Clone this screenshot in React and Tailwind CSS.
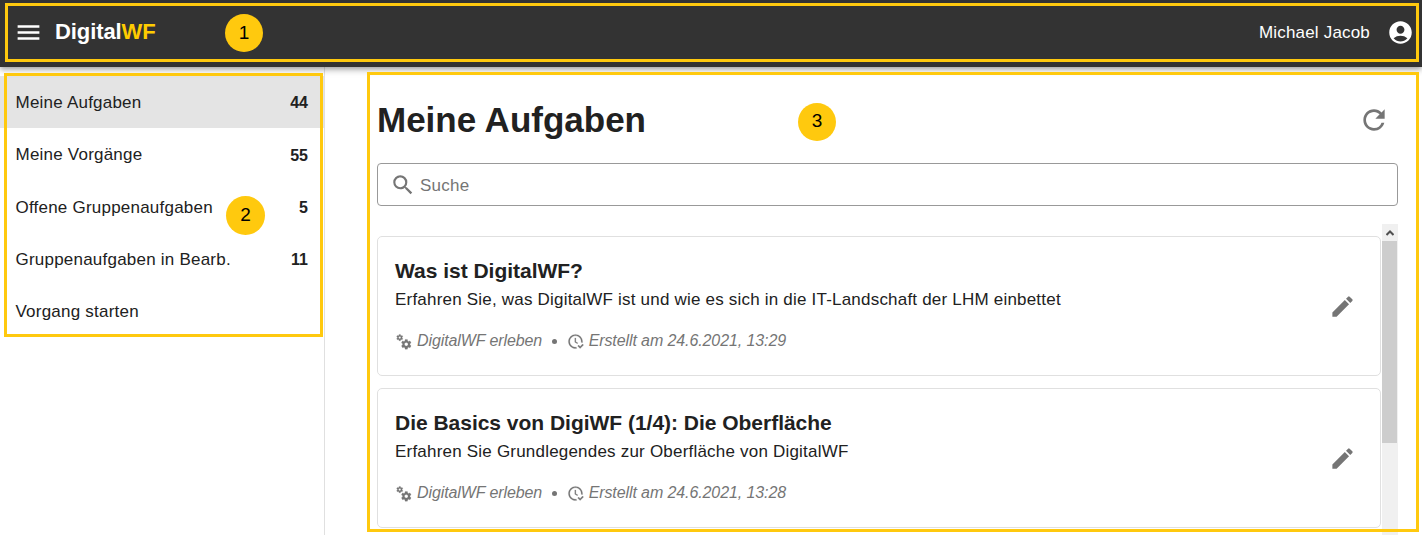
import React from "react";
import { MdMenu, MdAccountCircle, MdRefresh, MdSearch, MdEdit } from "react-icons/md";

const COGS =
  "M15.9,18.45C17.25,18.45 18.35,17.35 18.35,16C18.35,14.65 17.25,13.55 15.9,13.55C14.54,13.55 13.45,14.65 13.45,16C13.45,17.35 14.54,18.45 15.9,18.45M21.1,16.68L22.58,17.84C22.71,17.95 22.75,18.13 22.66,18.29L21.26,20.71C21.17,20.86 21,20.92 20.83,20.86L19.09,20.16C18.73,20.44 18.33,20.67 17.91,20.85L17.64,22.7C17.62,22.87 17.47,23 17.3,23H14.5C14.32,23 14.18,22.87 14.15,22.7L13.89,20.85C13.46,20.67 13.07,20.44 12.71,20.16L10.96,20.86C10.81,20.92 10.62,20.86 10.54,20.71L9.14,18.29C9.05,18.13 9.09,17.95 9.22,17.84L10.7,16.68L10.65,16L10.7,15.31L9.22,14.16C9.09,14.05 9.05,13.86 9.14,13.71L10.54,11.29C10.62,11.13 10.81,11.07 10.96,11.13L12.71,11.84C13.07,11.56 13.46,11.32 13.89,11.15L14.15,9.29C14.18,9.13 14.32,9 14.5,9H17.3C17.47,9 17.62,9.13 17.64,9.29L17.91,11.15C18.33,11.32 18.73,11.56 19.09,11.84L20.83,11.13C21,11.07 21.17,11.13 21.26,11.29L22.66,13.71C22.75,13.86 22.71,14.05 22.58,14.16L21.1,15.31L21.15,16L21.1,16.68M6.69,8.07C7.56,8.07 8.26,7.37 8.26,6.5C8.26,5.63 7.56,4.92 6.69,4.92A1.58,1.58 0 0,0 5.11,6.5C5.11,7.37 5.82,8.07 6.69,8.07M10.03,6.94L11,7.68C11.07,7.75 11.09,7.87 11.03,7.97L10.13,9.53C10.08,9.63 9.96,9.67 9.86,9.63L8.74,9.18L8,9.62L7.81,10.81C7.79,10.92 7.7,11 7.59,11H5.79C5.67,11 5.58,10.92 5.56,10.81L5.4,9.62L4.64,9.18L3.52,9.63C3.41,9.67 3.3,9.63 3.24,9.53L2.34,7.97C2.28,7.87 2.31,7.75 2.39,7.68L3.34,6.94L3.31,6.5L3.34,6.06L2.39,5.32C2.31,5.25 2.28,5.13 2.34,5.03L3.24,3.47C3.3,3.37 3.41,3.33 3.52,3.37L4.63,3.82L5.4,3.38L5.56,2.19C5.58,2.08 5.67,2 5.79,2H7.59C7.7,2 7.79,2.08 7.81,2.19L8,3.38L8.74,3.82L9.86,3.37C9.96,3.33 10.08,3.37 10.13,3.47L11.03,5.03C11.09,5.13 11.07,5.25 11,5.32L10.03,6.06L10.06,6.5L10.03,6.94Z";
const CLOCK_CHECK =
  "M23.5 17L18.5 22L15 18.5L16.5 17L18.5 19L22 15.5L23.5 17M13.1 19.9C12.7 20 12.4 20 12 20C7.6 20 4 16.4 4 12S7.6 4 12 4 20 7.6 20 12C20 12.4 20 12.7 19.9 13.1C20.6 13.2 21.2 13.4 21.8 13.7C21.9 13.1 22 12.6 22 12C22 6.5 17.5 2 12 2S2 6.5 2 12C2 17.5 6.5 22 12 22C12.6 22 13.2 21.9 13.7 21.8C13.4 21.3 13.2 20.6 13.1 19.9M15.6 14.1L12.5 12.3V7H11V13L14.5 15.1C14.8 14.7 15.2 14.4 15.6 14.1Z";

const NAV = [
  { label: "Meine Aufgaben", count: "44", active: true },
  { label: "Meine Vorgänge", count: "55" },
  { label: "Offene Gruppenaufgaben", count: "5" },
  { label: "Gruppenaufgaben in Bearb.", count: "11" },
  { label: "Vorgang starten" },
];

const TASKS = [
  {
    title: "Was ist DigitalWF?",
    text: "Erfahren Sie, was DigitalWF ist und wie es sich in die IT-Landschaft der LHM einbettet",
    process: "DigitalWF erleben",
    created: "Erstellt am 24.6.2021, 13:29",
  },
  {
    title: "Die Basics von DigiWF (1/4): Die Oberfläche",
    text: "Erfahren Sie Grundlegendes zur Oberfläche von DigitalWF",
    process: "DigitalWF erleben",
    created: "Erstellt am 24.6.2021, 13:28",
  },
];

function Glyph({ d, className }) {
  return (
    <svg viewBox="0 0 24 24" className={className} fill="currentColor" stroke="currentColor" strokeWidth="0.25">
      <path d={d} />
    </svg>
  );
}

function Header() {
  return (
    <header className="z-10 flex h-[67px] shrink-0 items-center bg-[#333333] pb-[3px] pl-[14px] pr-[8px] text-white shadow-[0_2px_4px_-1px_rgba(0,0,0,0.2),0_4px_5px_0_rgba(0,0,0,0.14),0_1px_10px_0_rgba(0,0,0,0.12)]">
      <MdMenu className="size-[29px]" />
      <div className="ml-[12px] text-[22px] leading-[26px] font-bold tracking-[-0.1px]">
        Digital<span className="text-[#ffcc00]">WF</span>
      </div>
      <div className="ml-auto pt-[2px] text-[17px] leading-[20px] tracking-[0.18px]">Michael Jacob</div>
      <MdAccountCircle className="ml-[17px] size-[27px]" />
    </header>
  );
}

function Sidebar() {
  return (
    <nav className="w-[325px] shrink-0 border-r border-[#e0e0e0] pt-[9px]">
      {NAV.map((n) => (
        <div
          key={n.label}
          className={
            "flex h-[52.2px] items-center justify-between pt-[1.76px] pl-[15.5px] pr-[16px] text-[17px] tracking-[0.22px] " +
            (n.active ? "bg-[#e4e4e4]" : "")
          }
        >
          <span>{n.label}</span>
          <span className="pt-[1px] text-[16px] font-bold tracking-normal">{n.count}</span>
        </div>
      ))}
    </nav>
  );
}

function TaskCard({ task }) {
  return (
    <article className="flex h-[140px] shrink-0 items-center justify-between rounded-[5px] border border-[#e0e0e0] pl-[17px] pr-[24px]">
      <div className="flex h-full flex-col">
        <h2 className="mt-[20px] text-[21px] leading-[28px] font-bold tracking-[-0.02px]">{task.title}</h2>
        <p className="mt-[3px] text-[17px] leading-[24px] tracking-[0.205px]">{task.text}</p>
        <div className="mt-[17px] flex items-center text-[16px] leading-[24px] tracking-[-0.1px] text-[#757575] italic">
          <Glyph d={COGS} className="size-[17px]" />
          <span className="ml-[5px]">{task.process}</span>
          <span className="ml-[9.5px] size-[5px] rounded-full bg-[#757575]" />
          <Glyph d={CLOCK_CHECK} className="ml-[10px] size-[17px]" />
          <span className="ml-[5px]">{task.created}</span>
        </div>
      </div>
      <MdEdit className="size-[27px] text-[#757575]" />
    </article>
  );
}

function Scrollbar() {
  return (
    <div className="flex w-[16px] flex-col bg-[#f0f0f0]">
      <div className="flex h-[17px] items-center justify-center">
        <svg viewBox="0 0 8 6" className="mr-[1px] h-[6px] w-[8px]">
          <path d="M0.5 5 L4 1.5 L7.5 5" fill="none" stroke="#505050" strokeWidth="2" />
        </svg>
      </div>
      <div className="mr-[1px] h-[202px] bg-[#cdcdcd]" />
    </div>
  );
}

function Callout({ className, children }) {
  return (
    <div
      className={
        "absolute z-20 flex items-center justify-center rounded-full bg-[#ffc90e] text-[19px] text-black " +
        className
      }
    >
      {children}
    </div>
  );
}

export default function App() {
  return (
    <div className="relative flex h-[535px] w-[1422px] flex-col overflow-hidden bg-white font-['Liberation_Sans',Arial,sans-serif] text-[#212121]">
      <Header />
      <div className="flex min-h-0 flex-1">
        <Sidebar />
        <main className="flex min-w-0 flex-1 flex-col pr-[24px] pl-[52px]">
          <div className="mt-[32px] flex h-[42px] items-center justify-between pr-[8px]">
            <h1 className="text-[35px] leading-[42px] font-bold">Meine Aufgaben</h1>
            <MdRefresh className="mb-[1px] size-[32px] text-[#757575]" />
          </div>
          <div className="mt-[22px] flex h-[43px] shrink-0 items-center rounded-[4px] border border-[#999999] pl-[12px] text-[#757575]">
            <MdSearch className="size-[26px]" />
            <span className="ml-[4px] pt-[2px] text-[17px] tracking-[0.25px]">Suche</span>
          </div>
          <div className="mt-[18px] flex min-h-0 flex-1 overflow-hidden">
            <div className="mr-[1px] flex flex-1 flex-col gap-[12px] pt-[12px]">
              {TASKS.map((t) => (
                <TaskCard key={t.title} task={t} />
              ))}
            </div>
            <Scrollbar />
          </div>
        </main>
      </div>

      <div className="absolute top-[3px] left-[5px] z-20 h-[59px] w-[1414px] border-[3px] border-[#ffc90e]" />
      <div className="absolute top-[73px] left-[4px] z-20 h-[264px] w-[319px] border-[3px] border-[#ffc90e]" />
      <div className="absolute top-[72px] left-[367px] z-20 h-[460px] w-[1052px] border-[3px] border-[#ffc90e]" />
      <Callout className="top-[14px] left-[225px] size-[38px]">1</Callout>
      <Callout className="top-[196px] left-[226px] size-[39px] pb-[1px]">2</Callout>
      <Callout className="top-[103px] left-[798px] size-[38px] pb-[1px]">3</Callout>
    </div>
  );
}
